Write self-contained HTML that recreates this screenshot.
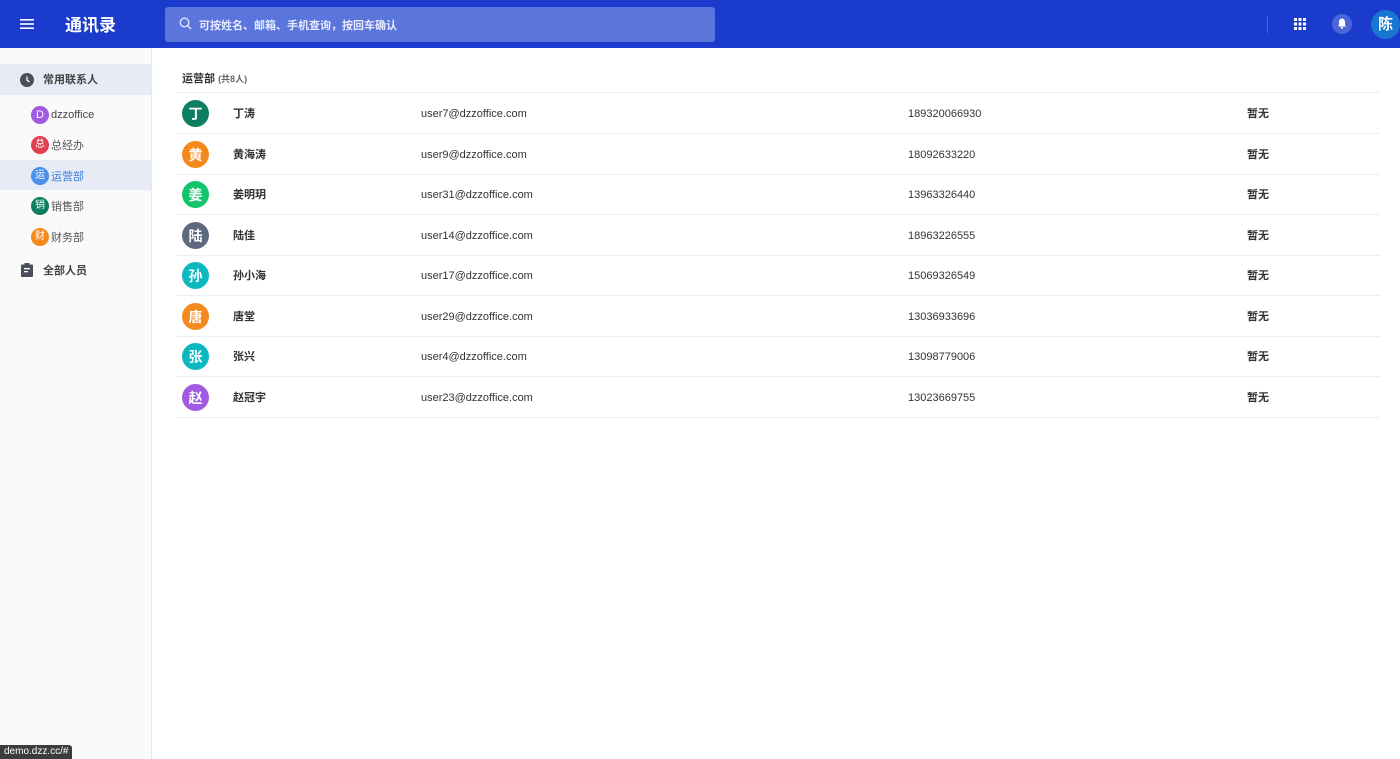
<!DOCTYPE html>
<html><head><meta charset="utf-8"><style>
*{box-sizing:border-box;margin:0;padding:0}
body{width:1400px;height:759px;overflow:hidden;font-family:"Liberation Sans","Noto Sans CJK SC",sans-serif;background:#fff;color:#333;position:relative}
.top{position:absolute;left:0;top:0;width:1400px;height:48px;background:#1a3bcc}
.side{position:absolute;left:0;top:48px;width:152px;height:711px;background:#fafafa;border-right:1px solid #e8e8e8}
.main{position:absolute;left:152px;top:48px;right:0;bottom:0}
.av{position:absolute;border-radius:50%;color:#fff;font-weight:bold;display:flex;align-items:center;justify-content:center;line-height:1}
.row{position:absolute;left:24px;width:1204px;height:41px;border-bottom:1px solid #eee;font-size:11px}
.row span{position:absolute;top:1px;line-height:40px;height:40px}
.row .av{top:7px!important}
.si{position:absolute;left:31px;height:18px;display:flex;align-items:center;font-size:11px;color:#555}
.si .d{width:18px;height:18px;border-radius:50%;color:#fff;font-size:10px;display:flex;align-items:center;justify-content:center;margin-right:2px;line-height:1}
</style></head><body>
<div class="top">
<svg style="position:absolute;left:20px;top:18px" width="14" height="12"><rect y="1" width="14" height="1.6" fill="#fff"/><rect y="5.2" width="14" height="1.6" fill="#fff"/><rect y="9.4" width="14" height="1.6" fill="#fff"/></svg>
<div style="position:absolute;left:65px;top:15px;color:#fff;font-size:17px;font-weight:bold;line-height:22px">通讯录</div>
<div style="position:absolute;left:165px;top:7px;width:550px;height:35px;background:#5a76dc;border-radius:3px">
<svg style="position:absolute;left:14px;top:10px" width="13" height="13"><circle cx="5.5" cy="5.5" r="4.3" stroke="#dfe5ff" stroke-width="1.4" fill="none"/><line x1="8.6" y1="8.6" x2="12" y2="12" stroke="#dfe5ff" stroke-width="1.5"/></svg>
<div style="position:absolute;left:34px;top:2px;line-height:35px;color:#e6ebff;font-size:11px;font-weight:bold">可按姓名、邮箱、手机查询，按回车确认</div></div>
<div style="position:absolute;left:1267px;top:16px;width:1px;height:17px;background:#4c65d6"></div>
<svg style="position:absolute;left:1294px;top:18px" width="12" height="12" fill="#fff"><rect x="0" y="0" width="3" height="3"/><rect x="4.5" y="0" width="3" height="3"/><rect x="9" y="0" width="3" height="3"/><rect x="0" y="4.5" width="3" height="3"/><rect x="4.5" y="4.5" width="3" height="3"/><rect x="9" y="4.5" width="3" height="3"/><rect x="0" y="9" width="3" height="3"/><rect x="4.5" y="9" width="3" height="3"/><rect x="9" y="9" width="3" height="3"/></svg>
<div style="position:absolute;left:1332px;top:14px;width:20px;height:20px;border-radius:50%;background:#4a66d8"></div>
<svg style="position:absolute;left:1337px;top:18px" width="10" height="11" fill="#fff"><path d="M5 0.5C2.8 0.5 2 2.5 2 4V7L1 8.5H9L8 7V4C8 2.5 7.2 0.5 5 0.5Z"/><circle cx="5" cy="9.8" r="1.1"/></svg>
<div class="av" style="left:1371px;top:10px;width:29px;height:29px;background:#1676d2;font-size:15px">陈</div>
</div>
<div class="side">
<div style="position:absolute;left:0;top:16px;width:151px;height:31px;background:#e6ebf5"></div>
<svg style="position:absolute;left:20px;top:25px" width="14" height="14"><circle cx="7" cy="7" r="7" fill="#4a4f5a"/><path d="M7 3.5V7.3L9.5 8.8" stroke="#fff" stroke-width="1.3" fill="none"/></svg>
<div style="position:absolute;left:43px;top:17px;line-height:31px;font-size:11px;font-weight:bold;color:#444">常用联系人</div>
<div style="position:absolute;left:0;top:112px;width:151px;height:30px;background:#e6ebf5"></div>
<div class="si" style="top:58px;color:#444"><div class="d" style="background:#a05be0;font-size:11px">D</div>dzzoffice</div>
<div class="si" style="top:88px"><div class="d" style="background:#e0404e">总</div>总经办</div>
<div class="si" style="top:119px;color:#3a7be0"><div class="d" style="background:#4a8fe8">运</div>运营部</div>
<div class="si" style="top:149px"><div class="d" style="background:#0e7e62">销</div>销售部</div>
<div class="si" style="top:180px"><div class="d" style="background:#f48a1e">财</div>财务部</div>
<svg style="position:absolute;left:21px;top:215px" width="12" height="14"><rect x="0" y="1.5" width="12" height="12.5" rx="1" fill="#4a4f5a"/><rect x="3.5" y="0" width="5" height="3" fill="#4a4f5a"/><rect x="3" y="5" width="6" height="1.3" fill="#fff"/><rect x="3" y="8" width="4" height="1.3" fill="#fff"/></svg>
<div style="position:absolute;left:43px;top:213px;line-height:20px;font-size:11px;font-weight:bold;color:#444">全部人员</div>
</div>
<div class="main">
<div style="position:absolute;left:30px;top:23px;line-height:16px;font-size:11px;font-weight:bold;color:#333">运营部 <span style="font-size:9px;color:#666">(共8人)</span></div>
<div style="position:absolute;left:24px;top:44px;width:1204px;height:1px;background:#eee"></div>
<div class="row" style="top:45px"><div class="av" style="left:6px;top:6px;width:27px;height:27px;background:#0e7e62;font-size:14px">丁</div><span style="left:57px;font-weight:bold">丁涛</span><span style="left:245px">user7@dzzoffice.com</span><span style="left:732px">189320066930</span><span style="left:1071px;font-weight:bold">暂无</span></div>
<div class="row" style="top:86px"><div class="av" style="left:6px;top:6px;width:27px;height:27px;background:#f48a1e;font-size:14px">黄</div><span style="left:57px;font-weight:bold">黄海涛</span><span style="left:245px">user9@dzzoffice.com</span><span style="left:732px">18092633220</span><span style="left:1071px;font-weight:bold">暂无</span></div>
<div class="row" style="top:126px"><div class="av" style="left:6px;top:6px;width:27px;height:27px;background:#14c46a;font-size:14px">姜</div><span style="left:57px;font-weight:bold">姜明玥</span><span style="left:245px">user31@dzzoffice.com</span><span style="left:732px">13963326440</span><span style="left:1071px;font-weight:bold">暂无</span></div>
<div class="row" style="top:167px"><div class="av" style="left:6px;top:6px;width:27px;height:27px;background:#5d6a7e;font-size:14px">陆</div><span style="left:57px;font-weight:bold">陆佳</span><span style="left:245px">user14@dzzoffice.com</span><span style="left:732px">18963226555</span><span style="left:1071px;font-weight:bold">暂无</span></div>
<div class="row" style="top:207px"><div class="av" style="left:6px;top:6px;width:27px;height:27px;background:#0bb8c0;font-size:14px">孙</div><span style="left:57px;font-weight:bold">孙小海</span><span style="left:245px">user17@dzzoffice.com</span><span style="left:732px">15069326549</span><span style="left:1071px;font-weight:bold">暂无</span></div>
<div class="row" style="top:248px"><div class="av" style="left:6px;top:6px;width:27px;height:27px;background:#f48a1e;font-size:14px">唐</div><span style="left:57px;font-weight:bold">唐堂</span><span style="left:245px">user29@dzzoffice.com</span><span style="left:732px">13036933696</span><span style="left:1071px;font-weight:bold">暂无</span></div>
<div class="row" style="top:288px"><div class="av" style="left:6px;top:6px;width:27px;height:27px;background:#0bb8c0;font-size:14px">张</div><span style="left:57px;font-weight:bold">张兴</span><span style="left:245px">user4@dzzoffice.com</span><span style="left:732px">13098779006</span><span style="left:1071px;font-weight:bold">暂无</span></div>
<div class="row" style="top:329px"><div class="av" style="left:6px;top:6px;width:27px;height:27px;background:#a05be0;font-size:14px">赵</div><span style="left:57px;font-weight:bold">赵冠宇</span><span style="left:245px">user23@dzzoffice.com</span><span style="left:732px">13023669755</span><span style="left:1071px;font-weight:bold">暂无</span></div>
</div>
<div style="position:absolute;left:0;top:745px;height:14px;padding:0 4px;background:#3c3c3c;color:#fff;font-size:10px;line-height:14px;border-top-right-radius:3px">demo.dzz.cc/#</div>
</body></html>
